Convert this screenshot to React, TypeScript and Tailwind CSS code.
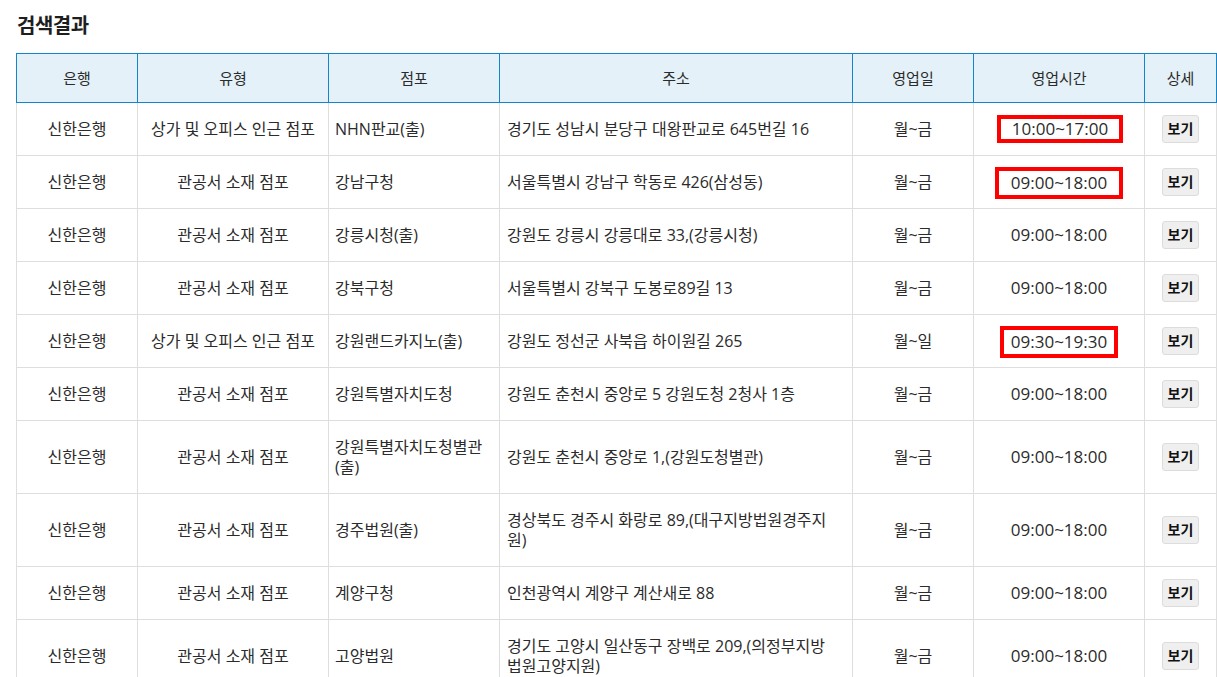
import React from 'react';

type Branch = {
  type: string;
  name: string[];
  address: string[];
  days: string;
  hours: string;
  // highlight box drawn around the hours (annotation)
  box?: string;
};

const branches: Branch[] = [
  {
    type: '상가 및 오피스 인근 점포',
    name: ['NHN판교(출)'],
    address: ['경기도 성남시 분당구 대왕판교로 645번길 16'],
    days: '월~금',
    hours: '10:00~17:00',
    box: 'px-[11px] py-[0px] translate-x-[1px]',
  },
  {
    type: '관공서 소재 점포',
    name: ['강남구청'],
    address: ['서울특별시 강남구 학동로 426(삼성동)'],
    days: '월~금',
    hours: '09:00~18:00',
    box: 'px-[12px] py-[2px] translate-y-[1px]',
  },
  {
    type: '관공서 소재 점포',
    name: ['강릉시청(출)'],
    address: ['강원도 강릉시 강릉대로 33,(강릉시청)'],
    days: '월~금',
    hours: '09:00~18:00',
  },
  {
    type: '관공서 소재 점포',
    name: ['강북구청'],
    address: ['서울특별시 강북구 도봉로89길 13'],
    days: '월~금',
    hours: '09:00~18:00',
  },
  {
    type: '상가 및 오피스 인근 점포',
    name: ['강원랜드카지노(출)'],
    address: ['강원도 정선군 사북읍 하이원길 265'],
    days: '월~일',
    hours: '09:30~19:30',
    box: 'px-[7px] py-[2px] translate-y-[1px]',
  },
  {
    type: '관공서 소재 점포',
    name: ['강원특별자치도청'],
    address: ['강원도 춘천시 중앙로 5 강원도청 2청사 1층'],
    days: '월~금',
    hours: '09:00~18:00',
  },
  {
    type: '관공서 소재 점포',
    name: ['강원특별자치도청별관', '(출)'],
    address: ['강원도 춘천시 중앙로 1,(강원도청별관)'],
    days: '월~금',
    hours: '09:00~18:00',
  },
  {
    type: '관공서 소재 점포',
    name: ['경주법원(출)'],
    address: ['경상북도 경주시 화랑로 89,(대구지방법원경주지', '원)'],
    days: '월~금',
    hours: '09:00~18:00',
  },
  {
    type: '관공서 소재 점포',
    name: ['계양구청'],
    address: ['인천광역시 계양구 계산새로 88'],
    days: '월~금',
    hours: '09:00~18:00',
  },
  {
    type: '관공서 소재 점포',
    name: ['고양법원'],
    address: ['경기도 고양시 일산동구 장백로 209,(의정부지방', '법원고양지원)'],
    days: '월~금',
    hours: '09:00~18:00',
  },
];

const headers = [
  { label: '은행', w: 'w-[121px]' },
  { label: '유형', w: 'w-[191px]' },
  { label: '점포', w: 'w-[171px]' },
  { label: '주소', w: 'w-[353px]' },
  { label: '영업일', w: 'w-[121px]' },
  { label: '영업시간', w: 'w-[171px]' },
  { label: '상세', w: 'w-[72px]' },
];

function Lines({ lines }: { lines: string[] }) {
  return (
    <>
      {lines.map((l, i) => (
        <React.Fragment key={i}>
          {i > 0 && <br />}
          {l}
        </React.Fragment>
      ))}
    </>
  );
}

export default function App() {
  return (
    <div className="min-h-screen bg-white px-[16px] pt-[12px] font-['Open_Sans','Noto_Sans_CJK_KR',sans-serif] text-[#2b2b2b]">
      <h2 className="mb-[13px] pl-[1px] text-[20px] font-bold leading-[28px] tracking-[-0.5px] text-[#1e1e1e]">검색결과</h2>

      <table className="w-[1200px] table-fixed border-collapse text-[16px] leading-[20px]">
        <thead>
          <tr className="bg-[#e4f1f8] text-[15px]">
            {headers.map((h) => (
              <th key={h.label} className={`${h.w} border border-[#1584c9] py-[14px] text-center font-normal`}>
                {h.label}
              </th>
            ))}
          </tr>
        </thead>
        <tbody>
          {branches.map((b, i) => (
            <tr key={i}>
              <td className="border border-[#dedede] py-[16px] text-center">신한은행</td>
              <td className="border border-[#dedede] py-[16px] text-center">{b.type}</td>
              <td className="border border-[#dedede] py-[16px] pl-[6px] pr-[2px] text-left">
                <Lines lines={b.name} />
              </td>
              <td className="border border-[#dedede] py-[16px] pl-[7px] pr-[4px] text-left">
                <Lines lines={b.address} />
              </td>
              <td className="border border-[#dedede] py-[16px] text-center">{b.days}</td>
              <td className="border border-[#dedede] py-[16px] text-center text-[17px]">
                {b.box ? (
                  <span className={`-my-[8px] inline-block border-[4px] border-[#ff0000] ${b.box}`}>{b.hours}</span>
                ) : (
                  b.hours
                )}
              </td>
              <td className="border border-[#dedede] py-[12px] text-center">
                <button className="h-[28px] w-[37px] rounded-[3px] border border-[#dcdcdc] bg-[#efefef] text-[14px] font-bold leading-[26px] text-[#111]">
                  보기
                </button>
              </td>
            </tr>
          ))}
        </tbody>
      </table>
    </div>
  );
}
